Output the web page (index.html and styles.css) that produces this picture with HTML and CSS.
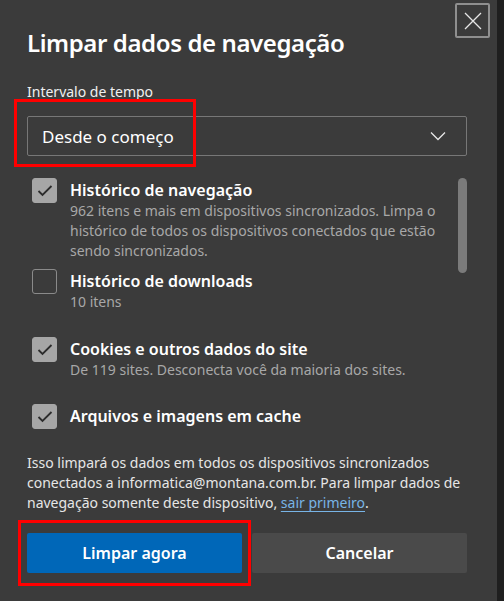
FILE: index.html
```html
<!DOCTYPE html>
<html lang="pt-BR">
<head>
<meta charset="utf-8">
<title>Limpar dados de navegação</title>
<link rel="stylesheet" href="styles.css">
</head>
<body>
<div class="page">
  <div class="dialog">
    <button class="close" aria-label="Fechar">
      <svg width="18" height="18" viewBox="0 0 18 18"><path d="M1 1 L17 17 M17 1 L1 17" stroke="#e6e6e6" stroke-width="1.3" fill="none"/></svg>
    </button>
    <h1 class="title">Limpar dados de navegação</h1>
    <div class="field-label">Intervalo de tempo</div>
    <div class="select">
      <span class="select-text">Desde o começo</span>
      <svg class="chev" width="16" height="10" viewBox="0 0 16 10"><path d="M1 1.5 L8 8.5 L15 1.5" stroke="#e6e6e6" stroke-width="1.3" fill="none"/></svg>
    </div>
    <div class="list">
      <div class="items">
        <div class="item">
          <span class="cb checked"><svg width="16" height="12" viewBox="0 0 16 12"><path d="M1.5 6 L5.5 10 L14.5 1" stroke="#2c2c2c" stroke-width="1.8" fill="none"/></svg></span>
          <div class="item-text">
            <div class="item-title">Histórico de navegação</div>
            <div class="item-desc">962 itens e mais em dispositivos sincronizados. Limpa o histórico de todos os dispositivos conectados que estão sendo sincronizados.</div>
          </div>
        </div>
        <div class="item i2">
          <span class="cb"></span>
          <div class="item-text">
            <div class="item-title">Histórico de downloads</div>
            <div class="item-desc">10 itens</div>
          </div>
        </div>
        <div class="item i3">
          <span class="cb checked"><svg width="16" height="12" viewBox="0 0 16 12"><path d="M1.5 6 L5.5 10 L14.5 1" stroke="#2c2c2c" stroke-width="1.8" fill="none"/></svg></span>
          <div class="item-text">
            <div class="item-title">Cookies e outros dados do site</div>
            <div class="item-desc">De 119 sites. Desconecta você da maioria dos sites.</div>
          </div>
        </div>
        <div class="item i4">
          <span class="cb checked"><svg width="16" height="12" viewBox="0 0 16 12"><path d="M1.5 6 L5.5 10 L14.5 1" stroke="#2c2c2c" stroke-width="1.8" fill="none"/></svg></span>
          <div class="item-text">
            <div class="item-title">Arquivos e imagens em cache</div>
          </div>
        </div>
      </div>
      <div class="scrollbar"><div class="thumb"></div></div>
    </div>
    <p class="note">Isso limpará os dados em todos os dispositivos sincronizados conectados a informatica@montana.com.br. Para limpar dados de navegação somente deste dispositivo, <a href="#">sair primeiro</a>.</p>
    <div class="buttons">
      <button class="btn primary">Limpar agora</button>
      <button class="btn secondary">Cancelar</button>
    </div>
    <div class="mark mark-select"></div>
    <div class="mark mark-button"></div>
  </div>
  <div class="backdrop"></div>
</div>
</body>
</html>
```
FILE: styles.css
```css
* { box-sizing: border-box; }
html, body { margin: 0; padding: 0; }
body {
  background: #202020;
  font-family: "Noto Sans", "Open Sans", sans-serif;
  color: #ffffff;
  width: 504px;
  height: 601px;
  overflow: hidden;
}
.page { display: flex; height: 601px; }
.dialog {
  position: relative;
  width: 497px;
  height: 601px;
  background: #3b3b3b;
  padding: 0 30px 0 27px;
  display: flex;
  flex-direction: column;
}
.backdrop { flex: 1; background: #1f1f1f; }
.close {
  position: absolute;
  top: 3px;
  right: 7px;
  width: 35px;
  height: 35px;
  border: 2px solid #8f8f8f;
  border-radius: 2px;
  background: transparent;
  padding: 0;
  display: flex;
  align-items: center;
  justify-content: center;
}
.title {
  margin: 27px 0 0 0;
  font-size: 24px;
  font-weight: 600;
  line-height: 32px;
  letter-spacing: -0.4px;
}
.field-label {
  margin-top: 24px;
  font-size: 14px;
  line-height: 18px;
  color: #f0f0f0;
}
.select {
  margin-top: 15px;
  height: 40px;
  border: 1px solid #777777;
  border-radius: 2px;
  display: flex;
  align-items: center;
  justify-content: space-between;
  padding: 0 20px 0 14px;
}
.select-text { font-size: 17px; color: #ffffff; }
.list {
  margin-top: 22px;
  display: flex;
  height: 261px;
}
.items { flex: 1; padding-left: 5px; }
.item { display: flex; gap: 13px; }
.item.i2 { margin-top: 8px; }
.item.i3 { margin-top: 25px; }
.item.i4 { margin-top: 24px; }
.cb {
  flex: none;
  width: 25px;
  height: 25px;
  border: 1px solid #8a8a8a;
  border-radius: 3px;
  display: flex;
  align-items: center;
  justify-content: center;
}
.cb.checked { background: #a6a6a6; border-color: #a6a6a6; }
.item-text { padding-top: 1px; }
.item-title { font-size: 16px; font-weight: 600; line-height: 22px; }
.item-desc { font-size: 14px; line-height: 20px; color: #a8a8a8; padding-right: 10px; }
.scrollbar { width: 9px; flex: none; }
.thumb { width: 9px; height: 95px; background: #7b7b7b; border-radius: 5px; }
.note {
  margin: 14px 0 0 0;
  font-size: 14px;
  line-height: 20px;
  color: #e6e6e6;
}
.note a { color: #78b4e6; text-decoration: underline; text-decoration-color: #78b4e6; text-underline-offset: 3px; }
.buttons {
  margin-top: 20px;
  display: flex;
  gap: 10px;
}
.btn {
  flex: 1;
  height: 40px;
  border: none;
  border-radius: 2px;
  font-family: inherit;
  font-size: 16px;
  font-weight: 600;
  color: #ffffff;
}
.primary { background: #0067b8; }
.secondary { background: #4a4a4a; }
.mark { position: absolute; border: 3px solid #ff0000; }
.mark-select { left: 14px; top: 99px; width: 182px; height: 68px; }
.mark-button { left: 18px; top: 520px; width: 233px; height: 66px; }
```
